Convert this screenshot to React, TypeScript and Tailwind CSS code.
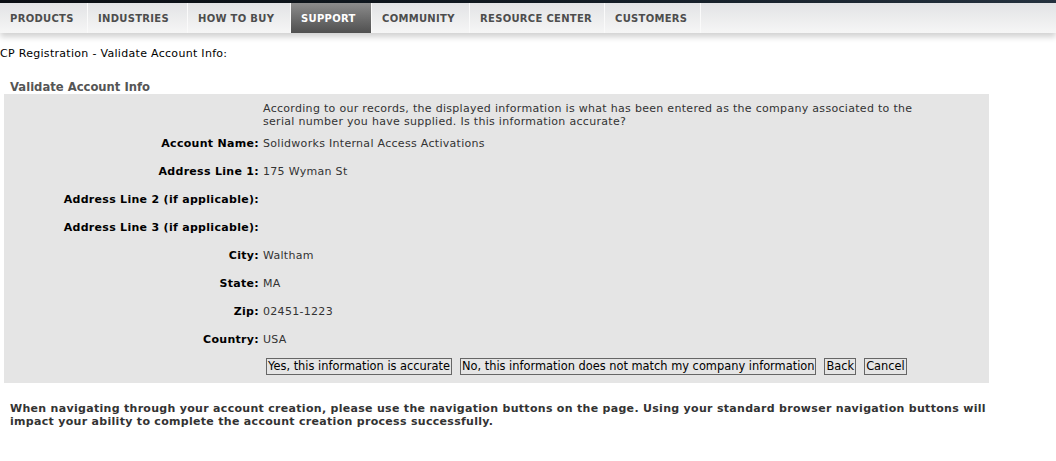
const navItems = [
  { label: "PRODUCTS", w: "w-[88px]" },
  { label: "INDUSTRIES", w: "w-[100px]" },
  { label: "HOW TO BUY", w: "w-[103px]" },
  { label: "SUPPORT", w: "w-[81px]", active: true },
  { label: "COMMUNITY", w: "w-[98px]" },
  { label: "RESOURCE CENTER", w: "w-[135px]" },
  { label: "CUSTOMERS", w: "w-[96px]" },
]

const rows = [
  { label: "Account Name:", value: "Solidworks Internal Access Activations" },
  { label: "Address Line 1:", value: "175 Wyman St" },
  { label: "Address Line 2 (if applicable):", value: "" },
  { label: "Address Line 3 (if applicable):", value: "" },
  { label: "City:", value: "Waltham" },
  { label: "State:", value: "MA" },
  { label: "Zip:", value: "02451-1223" },
  { label: "Country:", value: "USA" },
]

function NavBar() {
  return (
    <div className="relative">
      <div className="h-[3px] bg-gradient-to-r from-[#0b0f14] via-[#111a22] to-[#25323f]" />
      <div className="flex h-[30px] bg-gradient-to-b from-[#e2e3e5] to-[#f6f6f6] shadow-[0_4px_6px_rgba(0,0,0,0.18)]">
        {navItems.map((item) => (
          <div
            key={item.label}
            className={
              item.w +
              " flex items-center border-r border-[#fafafa] pl-[10px] pt-[1px] text-[10px] font-bold " +
              (item.active
                ? "bg-gradient-to-b from-[#8c8c8c] to-[#505050] text-white"
                : "text-[#4d4d4d]")
            }
          >
            {item.label}
          </div>
        ))}
      </div>
    </div>
  )
}

export default function App() {
  return (
    <div className="min-h-[461px] w-[1056px] bg-white font-['DejaVu_Sans',Verdana,sans-serif] text-[11px] tracking-[0.3px] text-black">
      <NavBar />
      <p className="mt-[14px] leading-[13px]">CP Registration - Validate Account Info:</p>

      <h2 className="mt-[20px] pl-[10px] text-[11.6px] font-bold leading-[14px] tracking-normal text-[#555]">
        Validate Account Info
      </h2>

      <div className="ml-[4px] w-[985px] bg-[#e5e5e5] pb-[8px] pt-[8px]">
        <div className="grid grid-cols-[255px_1fr] gap-x-[4px]">
          <div />
          <p className="mb-[2px] w-[656px] leading-[13px] text-[#333]">
            According to our records, the displayed information is what has been entered as the company associated to the
            serial number you have supplied. Is this information accurate?
          </p>
          {rows.map((row) => (
            <div key={row.label} className="contents">
              <div className="flex h-[28px] items-center justify-end font-bold">{row.label}</div>
              <div className="flex h-[28px] items-center text-[#333]">{row.value}</div>
            </div>
          ))}
          <div />
          <div className="flex gap-[8px] pl-[3px] pt-[4px]">
            {[
              "Yes, this information is accurate",
              "No, this information does not match my company information",
              "Back",
              "Cancel",
            ].map((b) => (
              <button
                key={b}
                className="h-[17px] border border-[#666] px-[1px] text-[11.4px] leading-[15px] tracking-normal text-black"
              >
                {b}
              </button>
            ))}
          </div>
        </div>
      </div>

      <p className="mt-[19px] w-[1000px] pl-[10px] font-bold leading-[13px] text-[#333]">
        When navigating through your account creation, please use the navigation buttons on the page. Using your standard
        browser navigation buttons will impact your ability to complete the account creation process successfully.
      </p>
    </div>
  )
}
